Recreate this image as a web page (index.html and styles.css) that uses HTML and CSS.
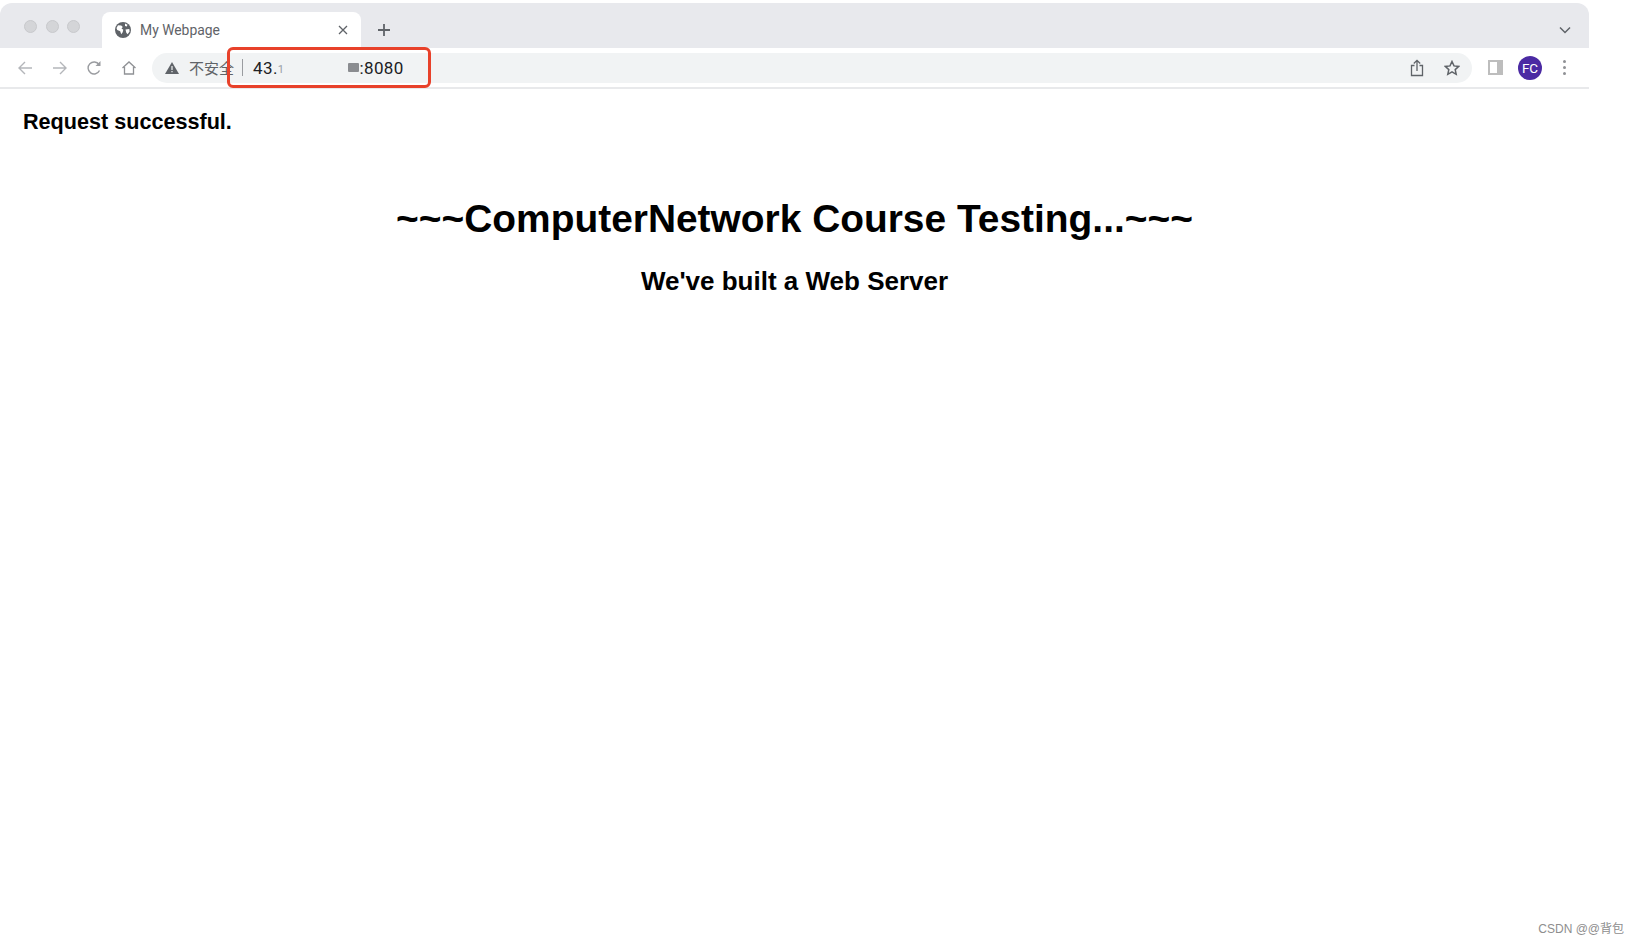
FILE: index.html
```html
<!DOCTYPE html>
<html lang="en">
<head>
    <meta charset="UTF-8">
    <meta name="viewport" content="width=device-width, initial-scale=1.0">
    <title>My Webpage</title>
    <link rel="stylesheet" href="styles.css">
</head>
<body>
    <div class="browser">
        <div class="tabstrip">
            <div class="lights">
                <span class="light"></span>
                <span class="light"></span>
                <span class="light"></span>
            </div>
            <div class="tab">
                <svg class="globe" width="16" height="16" viewBox="0 0 16 16">
                    <circle cx="8" cy="8" r="8" fill="#5f6368"/>
                    <path d="M3 3.2l3.2.2 1.6 1.5-1.3 1.5 1.8 1.4-.6 2.4-1.5 2-1-3L2.200 8 1.500 6z" fill="#fff"/>
                    <path d="M10 1.500l2.500 1.200-.7 1.800-1.800-.6zM10.500 7.500l3.800-.6.300 2.600-2 2.800-1.300-1.500z" fill="#fff"/>
                </svg>
                <span class="tab-title">My Webpage</span>
                <svg class="tab-close" width="10" height="10" viewBox="0 0 10 10">
                    <path d="M1 1l8 8M9 1l-8 8" stroke="#5f6368" stroke-width="1.300" fill="none"/>
                </svg>
            </div>
            <svg class="new-tab" width="14" height="14" viewBox="0 0 14 14">
                <path d="M7 1v12M1 7h12" stroke="#5f6368" stroke-width="1.800" fill="none"/>
            </svg>
            <svg class="tab-menu" width="12" height="8" viewBox="0 0 12 8">
                <path d="M1 1.500l5 5 5-5" stroke="#5f6368" stroke-width="1.500" fill="none"/>
            </svg>
        </div>

        <div class="toolbar">
            <div class="nav">
                <svg width="16" height="16" viewBox="0 0 16 16">
                    <path d="M15 8H2M8 2L2 8l6 6" stroke="#b4b6ba" stroke-width="1.400" fill="none"/>
                </svg>
                <svg width="16" height="16" viewBox="0 0 16 16">
                    <path d="M1 8h13M8 2l6 6-6 6" stroke="#b4b6ba" stroke-width="1.400" fill="none"/>
                </svg>
                <svg width="16" height="16" viewBox="0 0 16 16">
                    <path d="M13.500 10.500A6 6 0 1 1 13 4.500" stroke="#9a9ca0" stroke-width="1.400" fill="none"/>
                    <path d="M14.500 1v5h-5z" fill="#9a9ca0"/>
                </svg>
                <svg width="16" height="16" viewBox="0 0 16 16">
                    <path d="M1.500 8L8 2l6.500 6M3.500 7v7h9V7" stroke="#8f9195" stroke-width="1.300" fill="none"/>
                </svg>
            </div>
            <div class="omnibox">
                <svg class="warn" width="14" height="12" viewBox="0 0 14 12">
                    <path d="M7 0l7 12H0z" fill="#5f6368"/>
                    <path d="M6.400 4h1.200v4H6.400zM6.400 9h1.200v1.300H6.400z" fill="#f1f3f4"/>
                </svg>
                <span class="insecure">不安全</span>
                <span class="divider"></span>
                <span class="url">43.<span class="url-blur">1</span><span class="url-gap"></span><span class="url-smudge"></span>:8080</span>
                <div class="omni-actions">
                    <svg width="14" height="18" viewBox="0 0 14 18">
                        <path d="M4.500 6.500H1.500v10h11v-10h-3M7 12V1.500M3.800 4.500L7 1.300l3.200 3.200" stroke="#5f6368" stroke-width="1.300" fill="none"/>
                    </svg>
                    <svg width="16" height="16" viewBox="0 0 16 16">
                        <path d="M8 1.500l2 4.400 4.800.5-3.600 3.200 1 4.700L8 11.900l-4.200 2.400 1-4.700L1.200 6.400 6 5.900z" stroke="#5f6368" stroke-width="1.500" fill="none"/>
                    </svg>
                </div>
            </div>
            <div class="tools">
                <span class="side-panel"></span>
                <span class="avatar">FC</span>
                <span class="kebab"><i></i><i></i><i></i></span>
            </div>
        </div>

        <div class="page">
            <div class="status">Request successful.</div>
            <h1>~~~ComputerNetwork Course Testing...~~~</h1>
            <h2>We've built a Web Server</h2>
        </div>
    </div>

    <div class="highlight"></div>
    <div class="watermark">CSDN @@背包</div>
</body>
</html>
```

FILE: styles.css
```css
/* Styling for the page */
body {
    font-family: "Liberation Sans", Arial, sans-serif;
    margin: 0;
    padding: 0;
    background-color: #fff;
    height: 944px;
    overflow: hidden;
    position: relative;
}

.browser {
    width: 1589px;
    padding-top: 3px;
}

.tabstrip {
    height: 45px;
    background-color: #e8e9ed;
    border-radius: 12px 12px 0 0;
    display: flex;
    align-items: flex-start;
    padding-left: 24px;
}

.lights {
    display: flex;
    gap: 8.500px;
    margin-top: 17px;
    width: 78px;
}

.light {
    width: 13px;
    height: 13px;
    border-radius: 50%;
    background-color: #d4d5d8;
    border: 0.5px solid #c8c9cc;
    box-sizing: border-box;
}

.tab {
    width: 259px;
    height: 36px;
    margin-top: 9px;
    background-color: #fff;
    border-radius: 8px 8px 0 0;
    display: flex;
    align-items: center;
    padding: 0 13px 0 13px;
    box-sizing: border-box;
}

.tab-title {
    flex: 1;
    margin-left: 9px;
    font-family: "Roboto", sans-serif;
    font-size: 13.900px;
    color: #5f6368;
}

.new-tab {
    margin: 20px 0 0 16px;
}

.tab-menu {
    margin: 23px 0 0 auto;
    margin-right: 18px;
}

.toolbar {
    height: 39px;
    background-color: #fff;
    border-bottom: 2px solid #e8e9eb;
    display: flex;
    align-items: center;
}

.nav {
    display: flex;
    gap: 18.500px;
    width: 152px;
    padding-left: 17px;
    box-sizing: border-box;
}

.omnibox {
    width: 1320px;
    height: 30px;
    background-color: #f1f3f4;
    border-radius: 15px;
    display: flex;
    align-items: center;
    padding-left: 13px;
    box-sizing: border-box;
}

.insecure {
    margin-left: 10px;
    font-family: "Noto Sans CJK SC", sans-serif;
    font-size: 15px;
    color: #5f6368;
}

.divider {
    width: 1px;
    height: 17px;
    margin: 0 10px 0 8px;
    background-color: #9a9ca0;
}

.url {
    font-family: "Roboto", sans-serif;
    font-size: 17px;
    letter-spacing: 0.4px;
    color: #202124;
    display: flex;
    align-items: center;
}

.url-blur {
    color: #9aa0a6;
    font-size: 11px;
    margin-top: 4px;
}

.url-gap {
    width: 64px;
}

.url-smudge {
    width: 11px;
    height: 9px;
    background-color: #8a8c90;
    border-radius: 1px;
}

.omni-actions {
    margin-left: auto;
    margin-right: 12px;
    display: flex;
    align-items: center;
    gap: 20px;
}

.tools {
    flex: 1;
    display: flex;
    align-items: center;
    padding-left: 16px;
}

.side-panel {
    background-color: #fff;
    border: 2px solid #bdbdbd;
    border-right-width: 6px;
    width: 7px;
    height: 11px;
}

.avatar {
    width: 24px;
    height: 24px;
    margin-left: 15px;
    border-radius: 50%;
    background-color: #4b2aa3;
    color: #fff;
    font-family: "Roboto", sans-serif;
    font-size: 13.500px;
    text-align: center;
    line-height: 24px;
}

.kebab {
    margin-left: 21px;
    display: flex;
    flex-direction: column;
    gap: 3px;
}

.kebab i {
    display: block;
    width: 3px;
    height: 3px;
    border-radius: 50%;
    background-color: #8f9195;
}

.page {
    padding: 0 23px;
}

.status {
    margin-top: 20px;
    font-size: 21.600px;
    font-weight: bold;
    line-height: 26px;
    color: #000;
}

h1 {
    margin: 61px 0 0;
    font-size: 38.900px;
    line-height: 46px;
    text-align: center;
    color: #000;
}

h2 {
    margin: 24px 0 0;
    font-size: 26px;
    line-height: 30px;
    text-align: center;
    color: #000;
}

/* Red annotation drawn over the screenshot */
.highlight {
    position: absolute;
    left: 227px;
    top: 47px;
    width: 198px;
    height: 35px;
    border: 3px solid #e8412a;
    border-radius: 6px;
}

.watermark {
    position: absolute;
    right: 14px;
    top: 919px;
    font-family: "Liberation Sans", "Noto Sans CJK SC", sans-serif;
    font-size: 12px;
    color: #8e8e8e;
}
```
